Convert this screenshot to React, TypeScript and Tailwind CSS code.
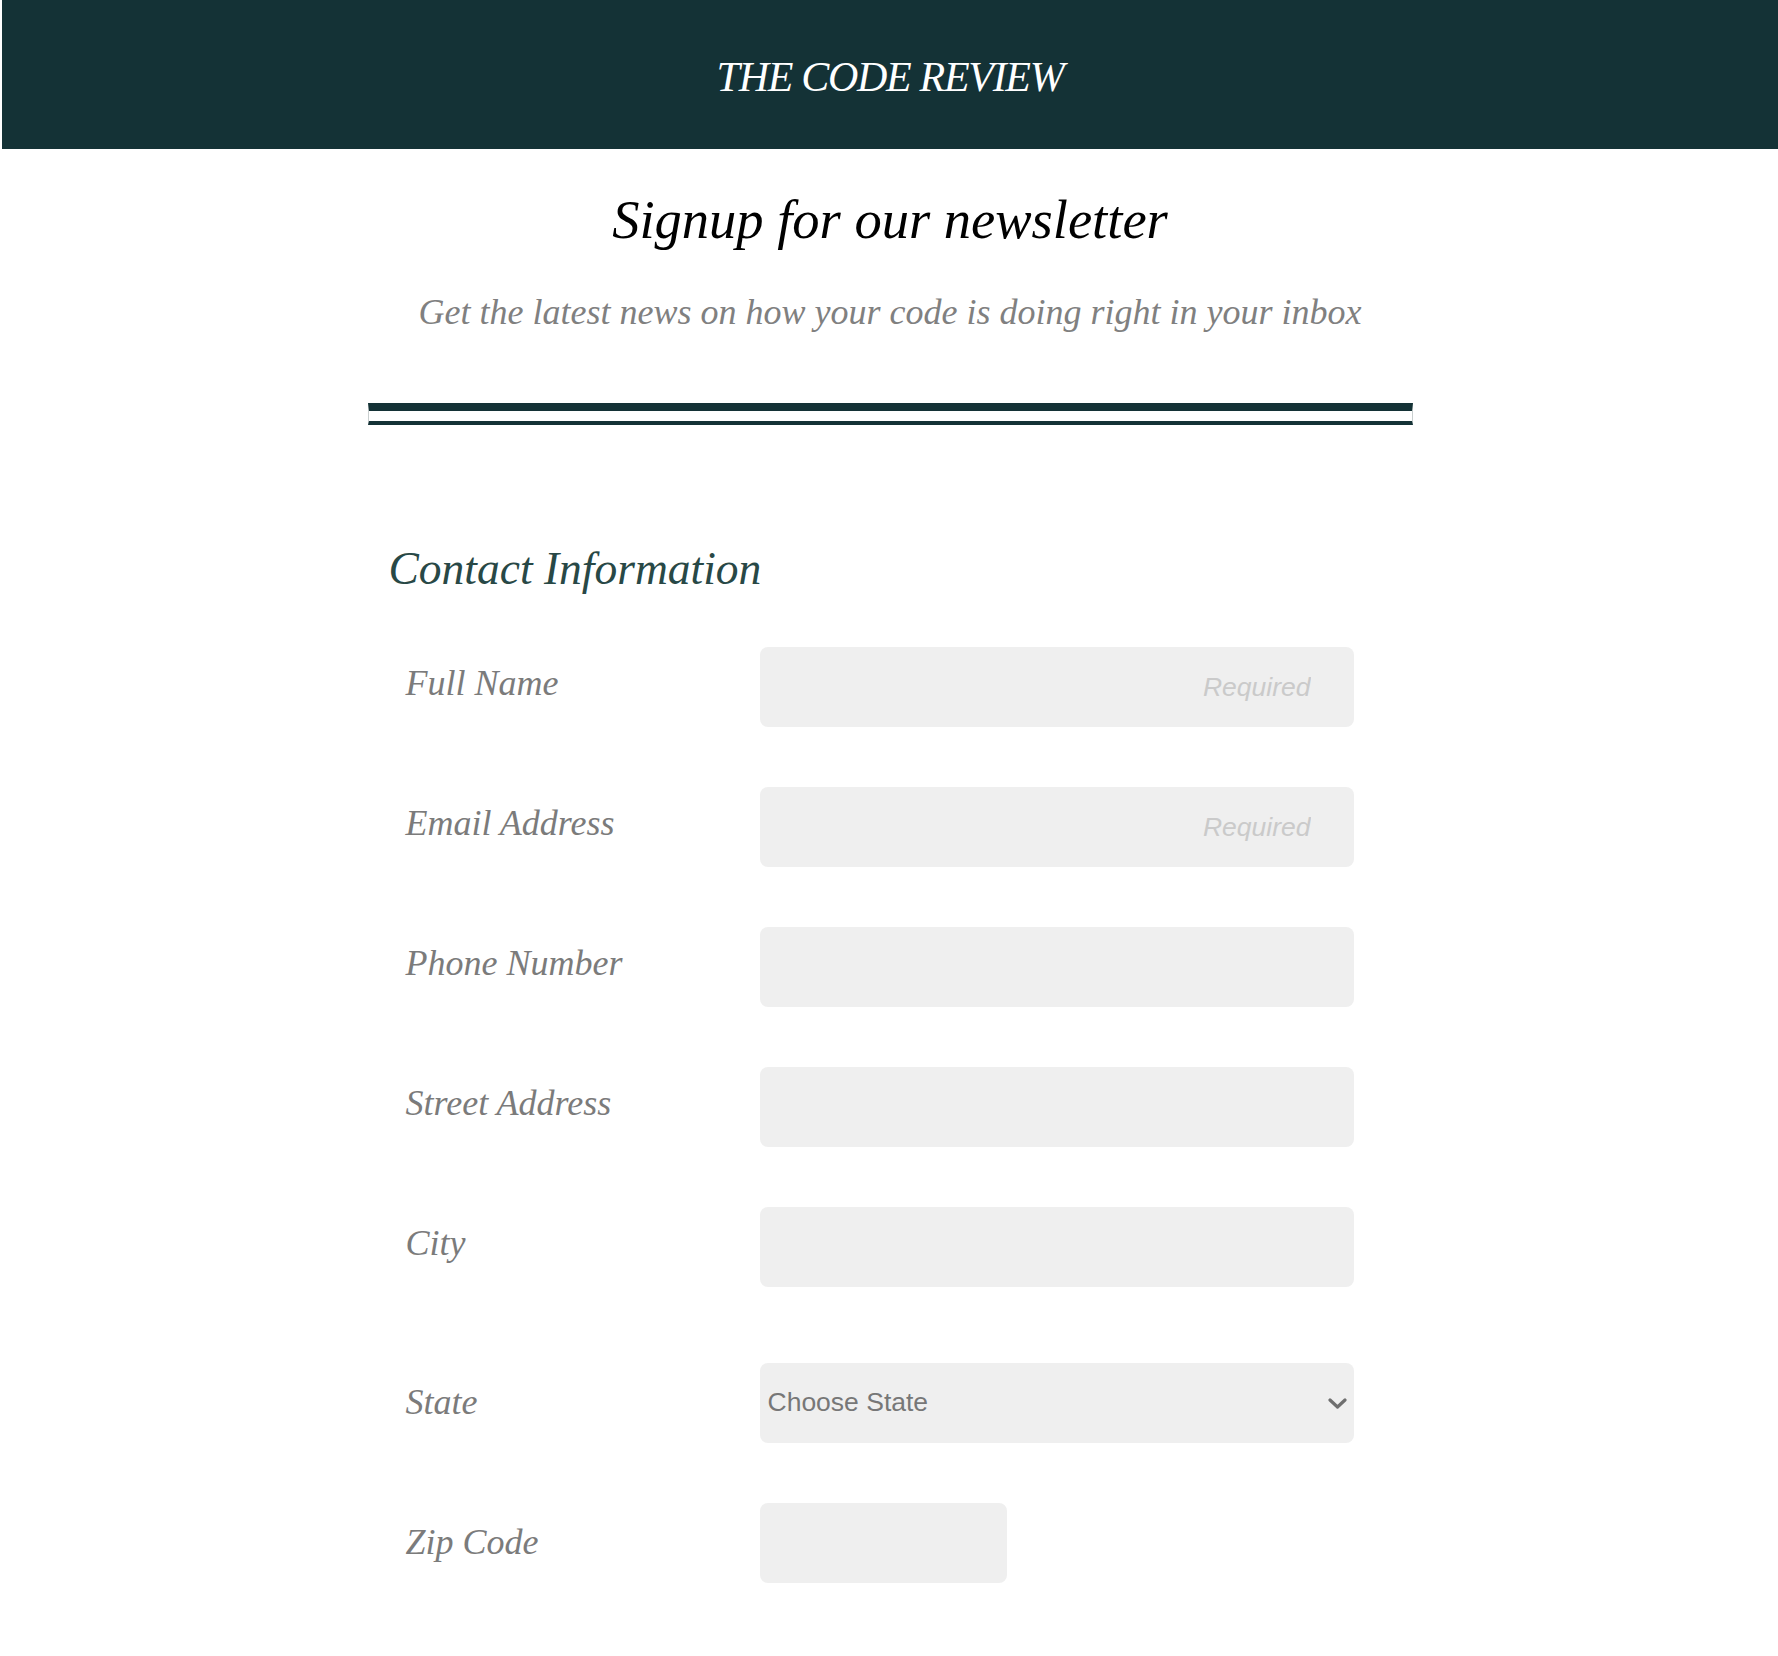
import React from "react";

const serif = { fontFamily: '"Liberation Serif", "Times New Roman", serif' };
const sans = { fontFamily: '"Liberation Sans", Arial, sans-serif' };

function Row({
  label,
  children,
  lift,
}: {
  label: string;
  children: React.ReactNode;
  lift: "a" | "b";
}) {
  return (
    <div className="flex h-[80px] items-center">
      <div
        className={`w-[392px] shrink-0 pl-[38px] text-[36px] italic leading-none text-[#7b7b7b] ${
          lift === "a" ? "mb-[9px]" : "mb-[3px]"
        }`}
        style={serif}
      >
        {label}
      </div>
      {children}
    </div>
  );
}

function TextInput({ required, narrow }: { required?: boolean; narrow?: boolean }) {
  return (
    <input
      type="text"
      placeholder={required ? "Required" : ""}
      className={`h-[80px] ${
        narrow ? "w-[247px]" : "w-[594px]"
      } rounded-lg bg-[#efefef] pr-[43px] text-right text-[26.5px] text-[#555] outline-none placeholder:italic placeholder:text-[#cacaca]`}
      style={sans}
    />
  );
}

export default function App() {
  return (
    <div className="min-h-[1656px] bg-white pl-[2px]">
      <header className="flex h-[149px] items-center justify-center bg-[#143236] pt-[4px]">
        <h1
          className="text-[42px] italic leading-none tracking-[-1.3px] text-white"
          style={serif}
        >
          THE CODE REVIEW
        </h1>
      </header>

      <main className="mx-auto w-[1045px]">
        <h2
          className="mt-[44px] text-center text-[54.5px] italic leading-none text-black"
          style={serif}
        >
          Signup for our newsletter
        </h2>
        <p
          className="mt-[46px] text-center text-[36px] italic leading-none text-[#808080]"
          style={serif}
        >
          Get the latest news on how your code is doing right in your inbox
        </p>

        <div className="mt-[73px] h-[22px] border-x border-t-[8px] border-b-[4px] border-x-[#c9cfcf] border-t-[#143236] border-b-[#143236]" />

        <h3
          className="mt-[121px] pl-[21px] text-[45.5px] italic leading-none text-[#284846]"
          style={serif}
        >
          Contact Information
        </h3>

        <form className="mt-[56px] flex flex-col gap-[60px] pb-[80px]">
          <Row label="Full Name" lift="a">
            <TextInput required />
          </Row>
          <Row label="Email Address" lift="a">
            <TextInput required />
          </Row>
          <Row label="Phone Number" lift="a">
            <TextInput />
          </Row>
          <Row label="Street Address" lift="a">
            <TextInput />
          </Row>
          <Row label="City" lift="a">
            <TextInput />
          </Row>
          <div className="mt-[16px]">
            <Row label="State" lift="b">
              <div className="relative h-[80px] w-[594px]">
                <select
                  defaultValue=""
                  className="h-full w-full appearance-none rounded-lg bg-[#efefef] pl-[8px] text-[26.5px] text-[#777777] outline-none"
                  style={sans}
                >
                  <option value="">Choose State</option>
                  <option>Alabama</option>
                  <option>Alaska</option>
                  <option>California</option>
                  <option>New York</option>
                  <option>Texas</option>
                </select>
                <svg
                  className="pointer-events-none absolute right-[7px] top-[35px]"
                  width="19"
                  height="11"
                  viewBox="0 0 19 11"
                >
                  <path
                    d="M2 2 L9.5 9 L17 2"
                    fill="none"
                    stroke="#6f6f6f"
                    strokeWidth="3.2"
                    strokeLinecap="round"
                    strokeLinejoin="round"
                  />
                </svg>
              </div>
            </Row>
          </div>
          <Row label="Zip Code" lift="b">
            <TextInput narrow />
          </Row>
        </form>
      </main>
    </div>
  );
}
